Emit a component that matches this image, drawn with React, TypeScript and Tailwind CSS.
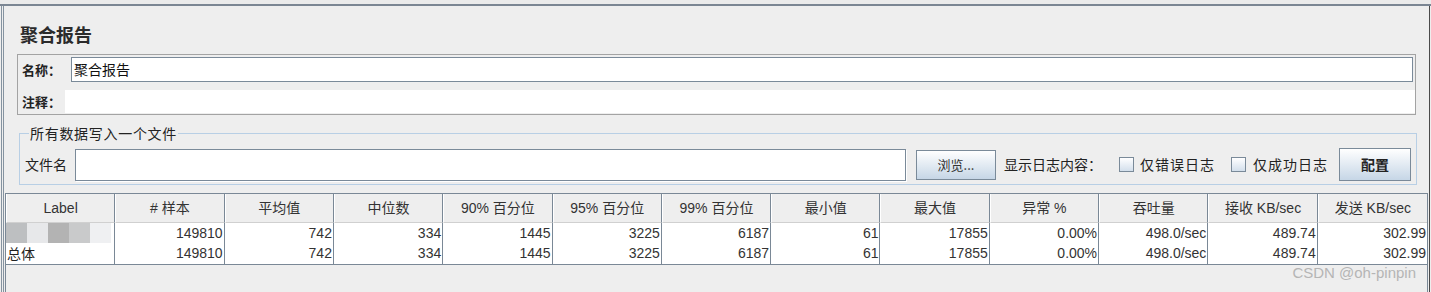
import React from "react";

const cols = [
  "Label",
  "# 样本",
  "平均值",
  "中位数",
  "90% 百分位",
  "95% 百分位",
  "99% 百分位",
  "最小值",
  "最大值",
  "异常 %",
  "吞吐量",
  "接收 KB/sec",
  "发送 KB/sec",
];

const values = ["149810", "742", "334", "1445", "3225", "6187", "61", "17855", "0.00%", "498.0/sec", "489.74", "302.99"];

const mosaic = ["bg-[#bdbfc1]", "bg-[#e7e8ea]", "bg-[#b3b3b3]", "bg-[#c9cacb]", "bg-[#eff0f2]"];

function Checkbox() {
  return (
    <div className="w-[15px] h-[15px] border border-[#7a8a99] bg-gradient-to-b from-white to-[#d3dfec]" />
  );
}

export default function App() {
  return (
    <div className="w-[1431px] h-[292px] bg-[#eeeeee] overflow-hidden flex flex-col text-[#333333] font-['Liberation_Sans','Noto_Sans_CJK_SC',sans-serif]">
      <div className="h-[4px] shrink-0 bg-[#ebebeb]" />
      <div className="flex-1 flex flex-col border-t-2 border-[#7b8693] min-h-0">
        <div className="ml-[1px] w-[1429px] flex-1 flex flex-col border-l-[3px] border-double border-l-[#8593a0] border-r border-r-[#4a4a4a] min-h-0">
          {/* Title */}
          <div className="h-[48px] pl-[16px] pt-[16px] shrink-0">
            <div className="text-[18px] leading-[24px] font-bold text-[#2b2b2b] font-['Noto_Sans_CJK_SC',sans-serif]">聚合报告</div>
          </div>

          {/* Name / comment box */}
          <div className="ml-[13px] w-[1399px] h-[61px] shrink-0 border border-[#a3a3a3] flex flex-col">
            <div className="flex items-center mt-[2px] h-[25px]">
              <div className="w-[53px] pl-[4px] text-[13px] font-bold text-[#222] font-['Noto_Sans_CJK_SC',sans-serif]">名称：</div>
              <div className="flex-1 mr-[2px] h-[25px] bg-white border border-[#7a8a99] flex items-center pl-[2px] text-[14px] text-[#111] font-['Noto_Sans_CJK_SC',sans-serif]">
                聚合报告
              </div>
            </div>
            <div className="flex items-center mt-[8px] h-[23px]">
              <div className="w-[47px] pl-[4px] text-[13px] font-bold text-[#222] font-['Noto_Sans_CJK_SC',sans-serif]">注释：</div>
              <div className="flex-1 h-[23px] bg-white" />
            </div>
          </div>

          {/* Fieldset */}
          <fieldset className="ml-[15px] mt-[9px] w-[1398px] shrink-0 border border-[#b8cfe5] pl-[5px] pr-[4px] pb-[3px]">
            <legend className="ml-[4px] px-[1px] text-[14px] tracking-[0.7px] leading-[18px] text-[#222] font-['Noto_Sans_CJK_SC',sans-serif]">所有数据写入一个文件</legend>
            <div className="flex items-center h-[33px] mt-[6px] text-[14px] font-['Noto_Sans_CJK_SC',sans-serif] text-[#222]">
              <div className="w-[50px]">文件名</div>
              <div className="w-[831px] h-[32px] bg-white border border-[#7a8a99] shadow-[1px_1px_0_#ffffff]" />
              <div className="ml-[10px] w-[80px] h-[30px] border border-[#7a8a99] bg-gradient-to-b from-white to-[#c6d6e6] flex items-center justify-center text-[13px] text-[#333]">
                浏览...
              </div>
              <div className="ml-[8px]">显示日志内容：</div>
              <div className="ml-[17px]"><Checkbox /></div>
              <div className="ml-[6px] tracking-[1px]">仅错误日志</div>
              <div className="ml-[16px]"><Checkbox /></div>
              <div className="ml-[7px] tracking-[1px]">仅成功日志</div>
              <div className="ml-[11px] w-[72px] h-[33px] border border-[#7a8a99] bg-gradient-to-b from-white to-[#c6d6e6] flex items-center justify-center font-bold text-[14px] text-[#222]">
                配置
              </div>
            </div>
          </fieldset>

          {/* Table */}
          <div className="ml-[1px] mt-[8px] w-[1423px] flex-1 border-t border-x border-[#7a8896] flex flex-col min-h-0">
            <div className="grid grid-cols-[repeat(13,minmax(0,1fr))] h-[29px] shrink-0">
              {cols.map((c, i) => (
                <div
                  key={c}
                  className={`flex items-center justify-center text-[14px] text-[#333] bg-[#eeeeee] border-l border-l-white border-b border-b-[#d0d0d0] ${i < cols.length - 1 ? "border-r border-r-[#7a8896]" : ""}`}
                >
                  {c}
                </div>
              ))}
            </div>
            <div className="grid grid-cols-[repeat(13,minmax(0,1fr))] h-[20px] shrink-0">
              <div className="flex border-r border-[#7a8896] bg-white">
                {mosaic.map((m) => (
                  <div key={m} className={`w-[21px] h-full ${m}`} />
                ))}
              </div>
              {values.map((v, i) => (
                <div
                  key={i}
                  className={`bg-white border-b border-[#7a8896] flex items-center justify-end pr-[1px] text-[14px] text-[#333] ${i < values.length - 1 ? "border-r" : ""}`}
                >
                  {v}
                </div>
              ))}
            </div>
            <div className="grid grid-cols-[repeat(13,minmax(0,1fr))] h-[20px] shrink-0">
              <div className="bg-white border-b border-r border-[#7a8896] flex items-center pl-[1px] text-[14px] text-[#222] font-['Noto_Sans_CJK_SC',sans-serif]">
                总体
              </div>
              {values.map((v, i) => (
                <div
                  key={i}
                  className={`bg-white border-b border-[#7a8896] flex items-center justify-end pr-[1px] text-[14px] text-[#333] ${i < values.length - 1 ? "border-r" : ""}`}
                >
                  {v}
                </div>
              ))}
            </div>
            <div className="flex justify-end pr-[11px] pt-[0px]">
              <div className="text-[15px] leading-[20px] text-[#b5b5b5]">CSDN @oh-pinpin</div>
            </div>
          </div>
        </div>
      </div>
    </div>
  );
}
